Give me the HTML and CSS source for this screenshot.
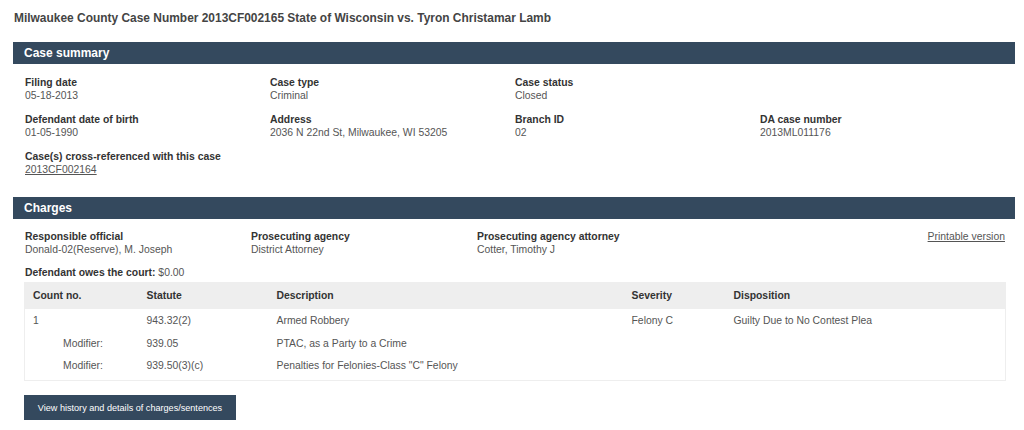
FILE: index.html
```html
<!DOCTYPE html>
<html>
<head>
<meta charset="utf-8">
<link rel="stylesheet" href="styles.css">
</head>
<body>
<div class="page">
  <h1 class="title">Milwaukee County Case Number 2013CF002165 State of Wisconsin vs. Tyron Christamar Lamb</h1>

  <section class="section">
    <h2 class="bar">Case summary</h2>
    <div class="summary">
      <div class="field"><div class="label">Filing date</div><div class="value">05-18-2013</div></div>
      <div class="field"><div class="label">Case type</div><div class="value">Criminal</div></div>
      <div class="field"><div class="label">Case status</div><div class="value">Closed</div></div>
      <div class="field"></div>
      <div class="field"><div class="label">Defendant date of birth</div><div class="value">01-05-1990</div></div>
      <div class="field"><div class="label">Address</div><div class="value">2036 N 22nd St, Milwaukee, WI 53205</div></div>
      <div class="field"><div class="label">Branch ID</div><div class="value">02</div></div>
      <div class="field"><div class="label">DA case number</div><div class="value">2013ML011176</div></div>
      <div class="field wide"><div class="label">Case(s) cross-referenced with this case</div><div class="value"><a class="link" href="#">2013CF002164</a></div></div>
    </div>
  </section>

  <section class="section">
    <h2 class="bar">Charges</h2>
    <div class="charges-head">
      <div class="field"><div class="label">Responsible official</div><div class="value">Donald-02(Reserve), M. Joseph</div></div>
      <div class="field"><div class="label">Prosecuting agency</div><div class="value">District Attorney</div></div>
      <div class="field"><div class="label">Prosecuting agency attorney</div><div class="value">Cotter, Timothy J</div></div>
      <a class="link printable" href="#">Printable version</a>
    </div>
    <div class="owes"><span class="label-inline">Defendant owes the court:</span> $0.00</div>
    <table class="charges">
      <thead>
        <tr><th class="c1">Count no.</th><th class="c2">Statute</th><th class="c3">Description</th><th class="c4">Severity</th><th class="c5">Disposition</th></tr>
      </thead>
      <tbody>
        <tr><td>1</td><td>943.32(2)</td><td>Armed Robbery</td><td>Felony C</td><td>Guilty Due to No Contest Plea</td></tr>
        <tr><td class="mod">Modifier:</td><td>939.05</td><td>PTAC, as a Party to a Crime</td><td></td><td></td></tr>
        <tr class="last"><td class="mod">Modifier:</td><td>939.50(3)(c)</td><td>Penalties for Felonies-Class "C" Felony</td><td></td><td></td></tr>
      </tbody>
    </table>
    <button class="btn">View history and details of charges/sentences</button>
  </section>
</div>
</body>
</html>
```

FILE: styles.css
```css
* { box-sizing: border-box; }
html, body { margin: 0; padding: 0; background: #fff; }
body {
  font-family: "Liberation Sans", Arial, sans-serif;
  color: #555;
  font-size: 10.4px;
}
.page {
  padding: 11px 9px 0 13px;
}
.title {
  margin: 0 0 17px 1px;
  font-size: 11.95px;
  line-height: 14px;
  font-weight: bold;
  color: #444;
}
.section { margin: 0; }
.bar {
  margin: 0;
  height: 22px;
  line-height: 22px;
  padding-left: 11px;
  background: #34495e;
  color: #fff;
  font-size: 12px;
  font-weight: bold;
}
.summary {
  display: grid;
  grid-template-columns: 245px 245px 245px 245px;
  row-gap: 11px;
  padding: 12px 0 21px 12px;
}
.summary .wide { grid-column: 1 / span 2; }
.field { line-height: 13px; }
.label {
  font-weight: bold;
  color: #333;
}
.value { color: #555; }
.link { color: #555; text-decoration: underline; }
.charges-head {
  display: grid;
  grid-template-columns: 226px 226px 1fr auto;
  padding: 11px 10px 0 12px;
}
.printable { line-height: 13px; }
.owes {
  padding: 10px 0 0 12px;
  line-height: 13px;
}
.label-inline { font-weight: bold; color: #333; }
.charges {
  margin: 3px 0 0 11px;
  width: 982px;
  border-collapse: collapse;
  border: 1px solid #eee;
}
.charges th {
  background: #eee;
  height: 26px;
  text-align: left;
  font-weight: bold;
  color: #333;
  padding: 0 0 0 8px;
}
.charges td {
  height: 23px;
  padding: 0 0 0 8px;
  color: #555;
}
.charges tr.last td { padding-bottom: 3px; height: 26px; }
.charges .c1 { width: 114px; }
.charges .c2 { width: 130px; }
.charges .c3 { width: 355px; }
.charges .c4 { width: 102px; }
.charges td.mod { padding-left: 38px; }
.btn {
  display: block;
  margin: 14px 0 0 11px;
  width: 212px;
  height: 25px;
  border: 0;
  background: #34495e;
  color: #fff;
  font-family: "Liberation Sans", Arial, sans-serif;
  font-size: 9.1px;
  padding: 0;
}
```
